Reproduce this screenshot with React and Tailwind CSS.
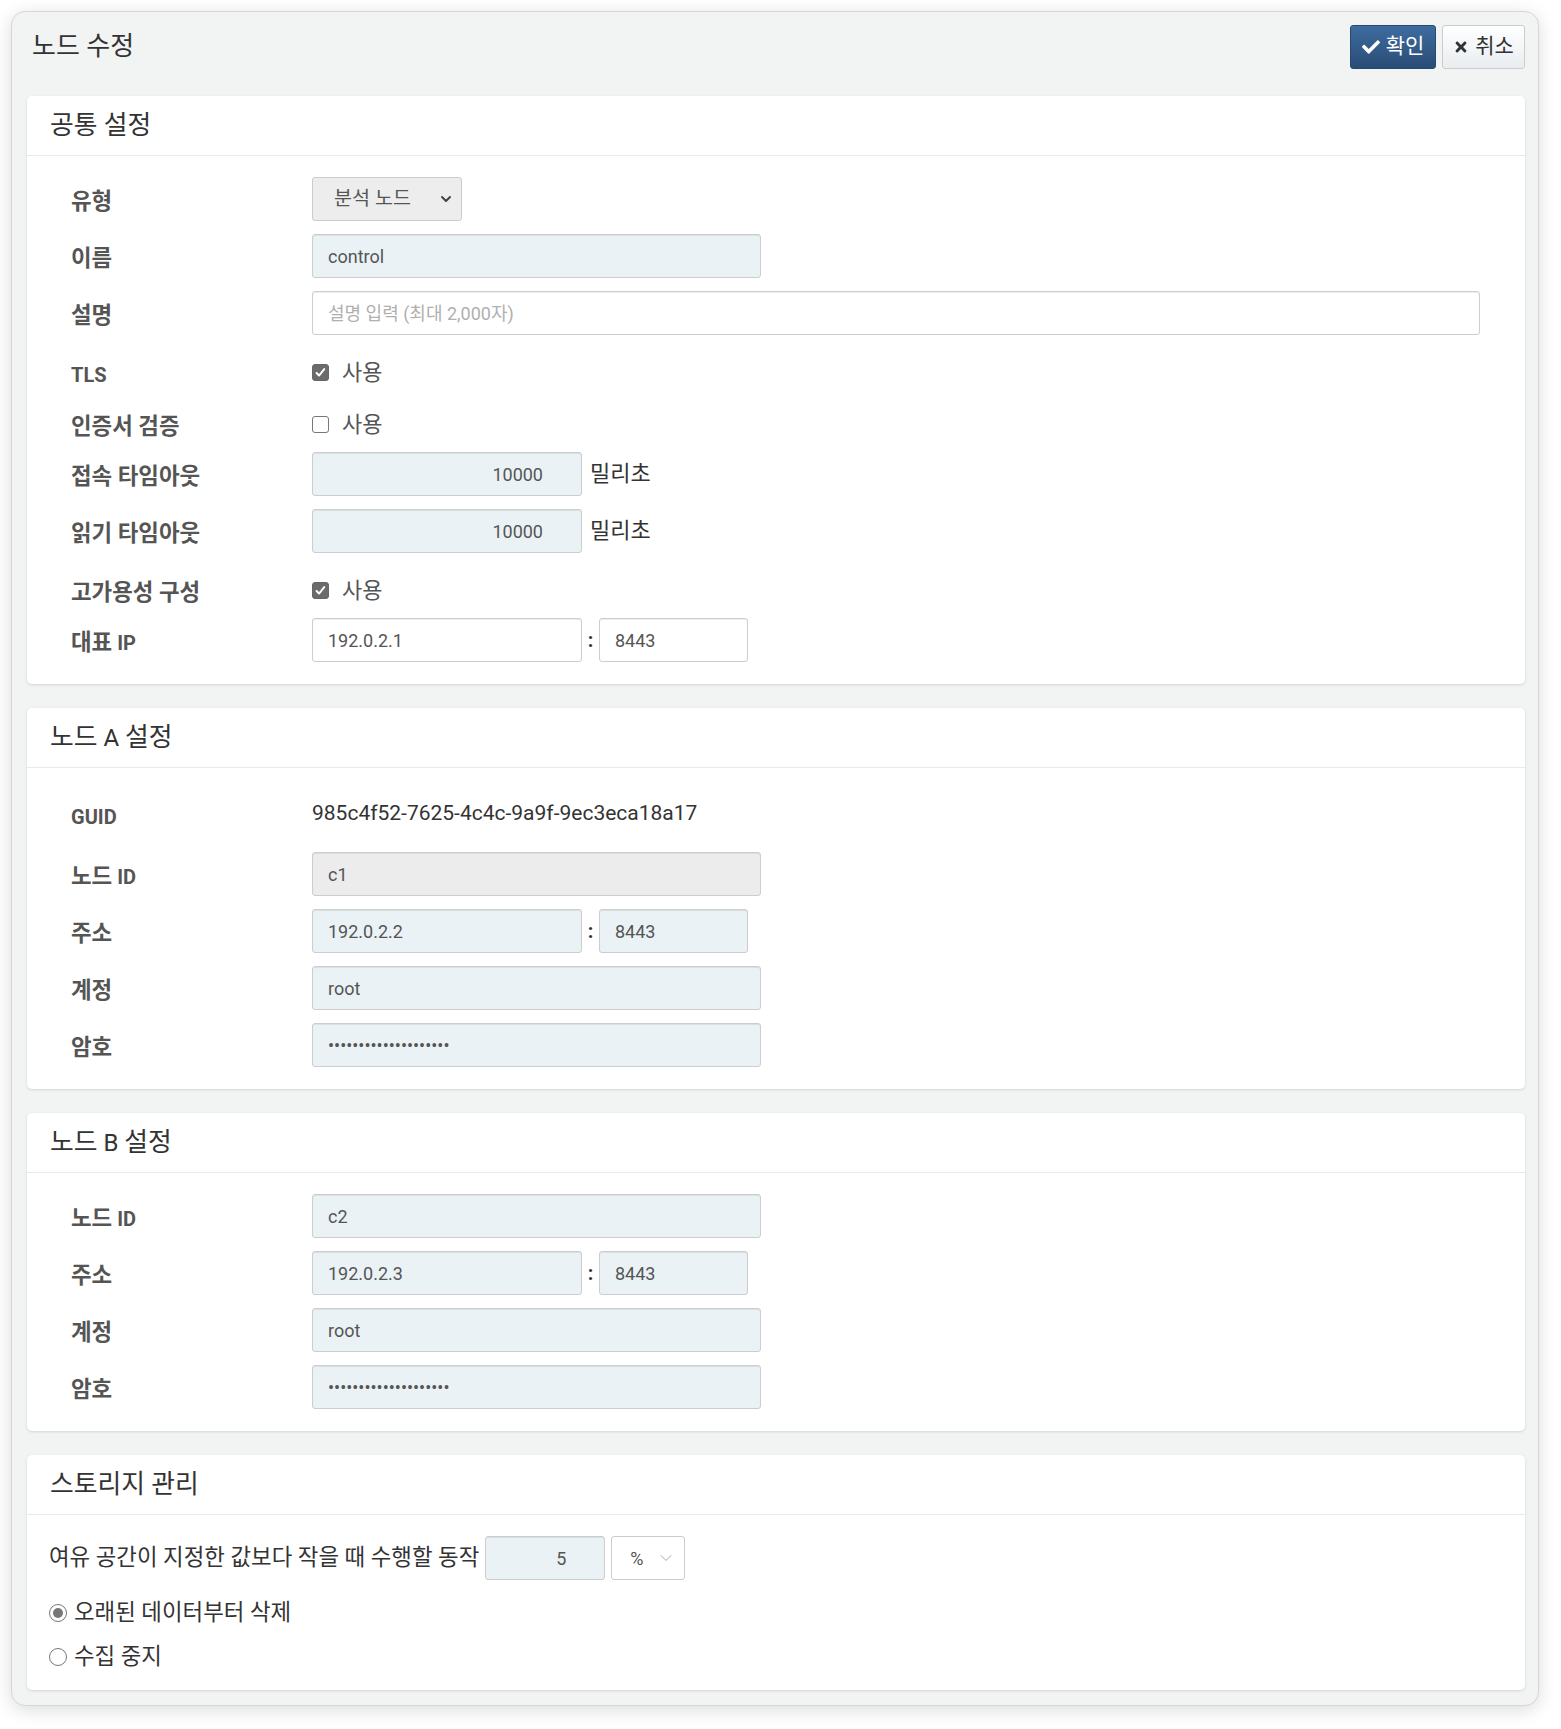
import { FaCheck, FaTimes } from 'react-icons/fa'
import { ChevronDown } from 'lucide-react'

// Hangul runs get a slightly larger size than the Latin text around them
function K({ text, k = 'text-[1.12em]' }) {
  const parts = text.split(/([가-힣]+(?:\s+[가-힣]+)*)/)
  return (
    <span>
      {parts.map((p, i) =>
        i % 2 === 1 ? (
          <span key={i} className={k}>
            {p}
          </span>
        ) : (
          p
        )
      )}
    </span>
  )
}

function Label({ children }) {
  return (
    <div className="w-[241px] shrink-0 pt-[6px] text-[20px] font-bold text-[#555]">
      <K text={children} />
    </div>
  )
}

function Field({ value, placeholder, className = '', bg = 'bg-[#eaf2f5]', right }) {
  return (
    <input
      readOnly
      value={value}
      placeholder={placeholder}
      className={`h-[44px] rounded-[3px] border border-[#cdcdcd] px-[15px] text-[18px] text-[#555] shadow-[inset_0_1px_1px_rgba(0,0,0,0.075)] outline-none placeholder:text-[#b0b0b0] ${bg} ${right ? 'pr-[38px] text-right' : ''} ${className}`}
    />
  )
}

function Check({ checked }) {
  return (
    <span
      className={`flex h-[17px] w-[17px] shrink-0 items-center justify-center rounded-[3px] border ${
        checked ? 'border-[#666] bg-[#6b6b6b]' : 'border-[#777] bg-white'
      }`}
    >
      {checked && (
        <svg width="13" height="13" viewBox="0 0 16 16">
          <path d="M3.2 8.6l3 3.2 6.4-8" fill="none" stroke="white" strokeWidth="2.4" strokeLinecap="round" strokeLinejoin="round" />
        </svg>
      )}
    </span>
  )
}

function CheckRow({ label, checked }) {
  return (
    <div className="flex h-[39px] items-center pt-[9px]">
      <Label>{label}</Label>
      <Check checked={checked} />
      <span className="ml-[13px] text-[22px] text-[#555]">사용</span>
    </div>
  )
}

function Row({ label, children, h = 'h-[44px]' }) {
  return (
    <div className={`flex items-center ${h}`}>
      <Label>{label}</Label>
      {children}
    </div>
  )
}

function Addr({ ip, port, bg }) {
  return (
    <>
      <Field value={ip} bg={bg} className="w-[270px]" />
      <span className="w-[17px] text-center text-[20px] font-bold text-[#333]">:</span>
      <Field value={port} bg={bg} className="w-[149px]" />
    </>
  )
}

function Card({ title, children, bodyClass = 'pl-[44px] pr-[45px] pb-[22px] flex flex-col gap-[13px]' }) {
  return (
    <div className="rounded-[5px] bg-white shadow-[0_1px_3px_rgba(0,0,0,0.13)]">
      <div className="flex h-[60px] items-center border-b border-[#e9e9e9] pl-[23px] text-[24px] text-[#333]">
        <K text={title} k="text-[1.075em]" />
      </div>
      <div className={`pt-[21px] ${bodyClass}`}>{children}</div>
    </div>
  )
}

function Radio({ checked, label }) {
  return (
    <div className="flex h-[24px] items-center">
      <span className="flex h-[18px] w-[18px] items-center justify-center rounded-full border-[1.5px] border-[#777] bg-white">
        {checked && <span className="h-[10px] w-[10px] rounded-full bg-[#777]" />}
      </span>
      <span className="ml-[7px] text-[22.4px] text-[#333]">{label}</span>
    </div>
  )
}

const pw = '••••••••••••••••••••'

export default function App() {
  return (
    <div className="min-h-screen bg-white pl-[11px] pt-[11px] font-['Roboto','Noto_Sans_CJK_KR',sans-serif]">
      <div className="w-[1528px] rounded-[14px] border border-[#d6d6d6] bg-[#f2f4f4] pb-[15px] pl-[15px] pr-[13px] pt-[13px] shadow-[0_4px_18px_rgba(0,0,0,0.14)]">
        {/* header */}
        <div className="mb-[27px] flex h-[44px] items-center justify-between">
          <div className="pb-[2px] pl-[5px] text-[26px] text-[#333]">노드 수정</div>
          <div className="flex gap-[6px]">
            <button className="flex h-[44px] w-[86px] items-center justify-center gap-[6px] rounded-[3px] border border-[#244a72] bg-gradient-to-b from-[#3f6c9f] to-[#2a4c76] text-[21px] text-white">
              <FaCheck size={18} />
              확인
            </button>
            <button className="flex h-[44px] w-[83px] items-center justify-center gap-[6px] rounded-[3px] border border-[#ccc] bg-gradient-to-b from-white to-[#e9edf0] text-[21px] text-[#333]">
              <FaTimes size={16} />
              취소
            </button>
          </div>
        </div>

        <div className="flex flex-col gap-[24px]">
          <Card title="공통 설정">
            <Row label="유형">
              <div className="flex h-[44px] w-[150px] items-center justify-between rounded-[3px] border border-[#ccc] bg-[#ededed] pl-[21px] pr-[7px] text-[19.6px] text-[#555]">
                분석 노드
                <ChevronDown size={16} strokeWidth={3} className="text-[#444]" />
              </div>
            </Row>
            <Row label="이름">
              <Field value="control" className="w-[449px]" />
            </Row>
            <Row label="설명">
              <Field value="" placeholder="설명 입력 (최대 2,000자)" bg="bg-white" className="flex-1" />
            </Row>
            <CheckRow label="TLS" checked />
            <CheckRow label="인증서 검증" />
            <Row label="접속 타임아웃">
              <Field value="10000" right className="w-[270px]" />
              <span className="ml-[8px] pb-[2px] text-[22px] text-[#333]">밀리초</span>
            </Row>
            <Row label="읽기 타임아웃">
              <Field value="10000" right className="w-[270px]" />
              <span className="ml-[8px] pb-[2px] text-[22px] text-[#333]">밀리초</span>
            </Row>
            <CheckRow label="고가용성 구성" checked />
            <Row label="대표 IP">
              <Addr ip="192.0.2.1" port="8443" bg="bg-white" />
            </Row>
          </Card>

          <Card title="노드 A 설정">
            <Row label="GUID" h="h-[50px]">
              <span className="text-[21px] text-[#333]">985c4f52-7625-4c4c-9a9f-9ec3eca18a17</span>
            </Row>
            <Row label="노드 ID">
              <Field value="c1" bg="bg-[#ececec]" className="w-[449px]" />
            </Row>
            <Row label="주소">
              <Addr ip="192.0.2.2" port="8443" />
            </Row>
            <Row label="계정">
              <Field value="root" className="w-[449px]" />
            </Row>
            <Row label="암호">
              <Field value={pw} className="w-[449px]" />
            </Row>
          </Card>

          <Card title="노드 B 설정">
            <Row label="노드 ID">
              <Field value="c2" className="w-[449px]" />
            </Row>
            <Row label="주소">
              <Addr ip="192.0.2.3" port="8443" />
            </Row>
            <Row label="계정">
              <Field value="root" className="w-[449px]" />
            </Row>
            <Row label="암호">
              <Field value={pw} className="w-[449px]" />
            </Row>
          </Card>

          <Card title="스토리지 관리" bodyClass="pl-[22px] pb-[21px]">
            <div className="flex h-[44px] items-center">
              <span className="text-[22.4px] text-[#333]">여유 공간이 지정한 값보다 작을 때 수행할 동작</span>
              <Field value="5" right className="ml-[6px] w-[120px]" />
              <div className="ml-[6px] flex h-[44px] w-[74px] items-center justify-between rounded-[3px] border border-[#ccc] bg-white pl-[18px] pr-[8px] text-[18px] text-[#555]">
                %
                <ChevronDown size={20} strokeWidth={1} className="text-[#999]" />
              </div>
            </div>
            <div className="mt-[21px] flex flex-col gap-[20px]">
              <Radio checked label="오래된 데이터부터 삭제" />
              <Radio label="수집 중지" />
            </div>
          </Card>
        </div>
      </div>
    </div>
  )
}
